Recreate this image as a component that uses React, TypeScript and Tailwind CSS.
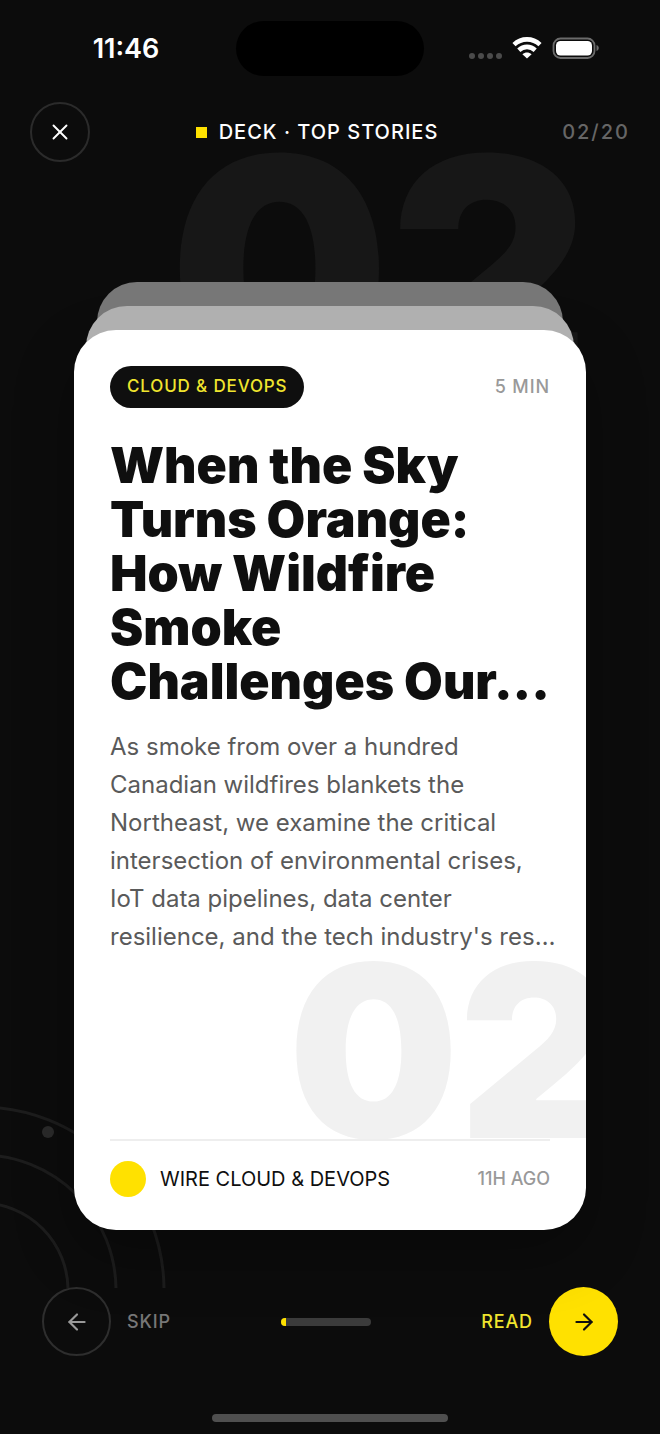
import { ArrowLeft, ArrowRight, X } from "lucide-react";

const story = {
  number: "02",
  total: "20",
  category: "CLOUD & DEVOPS",
  readTime: "5 MIN",
  title: ["When the Sky", "Turns Orange:", "How Wildfire", "Smoke", "Challenges Our..."],
  summary: [
    "As smoke from over a hundred",
    "Canadian wildfires blankets the",
    "Northeast, we examine the critical",
    "intersection of environmental crises,",
    "IoT data pipelines, data center",
    "resilience, and the tech industry's res…",
  ],
  source: "WIRE CLOUD & DEVOPS",
  age: "11H AGO",
};

const StatusBar = () => (
  <div className="grid h-24 grid-cols-[1fr_188px_1fr] items-center">
    <span className="justify-self-center pt-0.5 pl-4 text-[27px] font-semibold">11:46</span>
    <div className="h-[55px] rounded-full bg-black" />
    <div className="flex items-center justify-self-center pr-4">
      <svg width="34" height="24" viewBox="0 0 34 24" fill="#4b4b4b">
        <circle cx="4" cy="20" r="3" />
        <circle cx="13" cy="20" r="3" />
        <circle cx="22" cy="20" r="3" />
        <circle cx="31" cy="20" r="3" />
      </svg>
      <svg className="ml-2.5" width="30" height="22" viewBox="0 0 30 22" fill="none" stroke="#fff" strokeWidth="4.600">
        <path d="M2 7.6C9.5.6 20.500.6 28 7.600" />
        <path d="M6.800 13.200C11.500 8.800 18.500 8.800 23.200 13.200" />
        <path d="M15 21.500L10.400 17.200C13.200 15 16.800 15 19.600 17.200Z" fill="#fff" stroke="none" />
      </svg>
      <svg className="ml-2.5" width="48" height="24" viewBox="0 0 48 24" fill="none">
        <rect x="1.500" y="2.500" width="41" height="19.500" rx="7" stroke="#6b6b6b" strokeWidth="1.800" />
        <rect x="4" y="5" width="36" height="14.500" rx="4.500" fill="#fff" />
        <path d="M44.500 9C47.500 9.800 47.500 14.200 44.500 15Z" fill="#6b6b6b" />
      </svg>
    </div>
  </div>
);

const Header = () => (
  <header className="mt-1.5 flex items-center px-[30px]">
    <button
      aria-label="Close"
      className="grid size-[60px] place-items-center rounded-full border-2 border-[#2b2b2b]"
    >
      <X size={26} strokeWidth={1.75} />
    </button>
    <h1 className="flex flex-1 items-center justify-center gap-3 text-xl font-medium tracking-wider">
      <span className="size-[11px] bg-[#ffe100]" />
      DECK · TOP STORIES
    </h1>
    <span className="w-[86px] text-right text-xl font-medium tracking-widest text-[#666]">
      {story.number}/{story.total}
    </span>
  </header>
);

const Rings = () => (
  <svg
    className="absolute bottom-[146px] left-0 -z-10"
    width="170"
    height="190"
    viewBox="0 0 170 190"
    fill="none"
    stroke="#1d1d1d"
    strokeWidth="3"
  >
    <circle cx="-19" cy="192" r="87" />
    <circle cx="-19" cy="192" r="135" />
    <circle cx="-19" cy="192" r="183" />
    <circle cx="48" cy="34" r="6" fill="#2b2b2b" stroke="none" />
  </svg>
);

const StoryCard = () => (
  <article className="relative isolate flex flex-1 flex-col overflow-hidden rounded-[42px] bg-white px-9 pt-9 pb-[33px] text-[#0f0f0f]">
    <span className="absolute -right-7 -bottom-px -z-10 text-[240px] font-black text-[#f1f1f1]">
      {story.number}
    </span>
    <div className="flex items-center justify-between">
      <span className="flex h-[42px] items-center rounded-full bg-[#0f0f0f] px-[17px] text-[17px] font-medium tracking-wider text-[#f0e52e]">
        {story.category}
      </span>
      <span className="text-lg font-medium tracking-wider text-[#999]">{story.readTime}</span>
    </div>
    <h2 className="mt-[30px] text-[50px] leading-[54px] font-black whitespace-nowrap">
      {story.title.map((line) => (
        <span key={line} className="block">
          {line}
        </span>
      ))}
    </h2>
    <p className="mt-5 text-2xl leading-[38px] whitespace-nowrap text-[#5a5a5a]">
      {story.summary.map((line) => (
        <span key={line} className="block">
          {line}
        </span>
      ))}
    </p>
    <footer className="mt-auto flex items-center border-t-2 border-[#eee] pt-5">
      <span className="size-9 rounded-full bg-[#ffe100]" />
      <span className="ml-3.5 text-xl">{story.source}</span>
      <span className="ml-auto text-lg font-medium text-[#999]">{story.age}</span>
    </footer>
  </article>
);

const Controls = () => (
  <nav className="mt-[57px] flex items-center justify-between px-[42px]">
    <button className="flex items-center gap-4 text-lg font-medium tracking-wider text-[#777]">
      <span className="grid size-[69px] place-items-center rounded-full border-2 border-[#2e2e2e] text-[#999]">
        <ArrowLeft size={26} strokeWidth={2} />
      </span>
      SKIP
    </button>
    <div className="h-2 w-[90px] overflow-hidden rounded-full bg-[#3b3b3b]">
      <div className="h-full w-[5px] bg-[#ffe100]" />
    </div>
    <button className="flex items-center gap-4 text-lg font-medium tracking-wider text-[#f0e52e]">
      READ
      <span className="grid size-[69px] place-items-center rounded-full bg-[#ffe100] text-[#0f0f0f]">
        <ArrowRight size={26} strokeWidth={2} />
      </span>
    </button>
  </nav>
);

const App = () => {
  return (
    <div className="relative isolate flex min-h-screen flex-col overflow-hidden bg-[#0c0c0c] font-['Inter',sans-serif] text-white">
      <span className="absolute top-[114px] right-[70px] -z-10 text-[310px] leading-none font-black text-[#171717]">
        {story.number}
      </span>
      <Rings />
      <StatusBar />
      <Header />
      <main className="mt-[168px] flex flex-1 flex-col px-[74px]">
        <div className="relative flex flex-1 flex-col rounded-[42px] shadow-[0_24px_60px_rgba(0,0,0,0.3)]">
          <div className="absolute inset-x-[23px] -top-12 h-24 rounded-t-[40px] bg-[#777]" />
          <div className="absolute inset-x-3 -top-6 h-24 rounded-t-[41px] bg-[#b0b0b0]" />
          <StoryCard />
        </div>
      </main>
      <Controls />
      <div className="mx-auto mt-[58px] mb-3 h-2 w-[236px] rounded-full bg-[#4f4f4f]" />
    </div>
  );
};

export default App;
